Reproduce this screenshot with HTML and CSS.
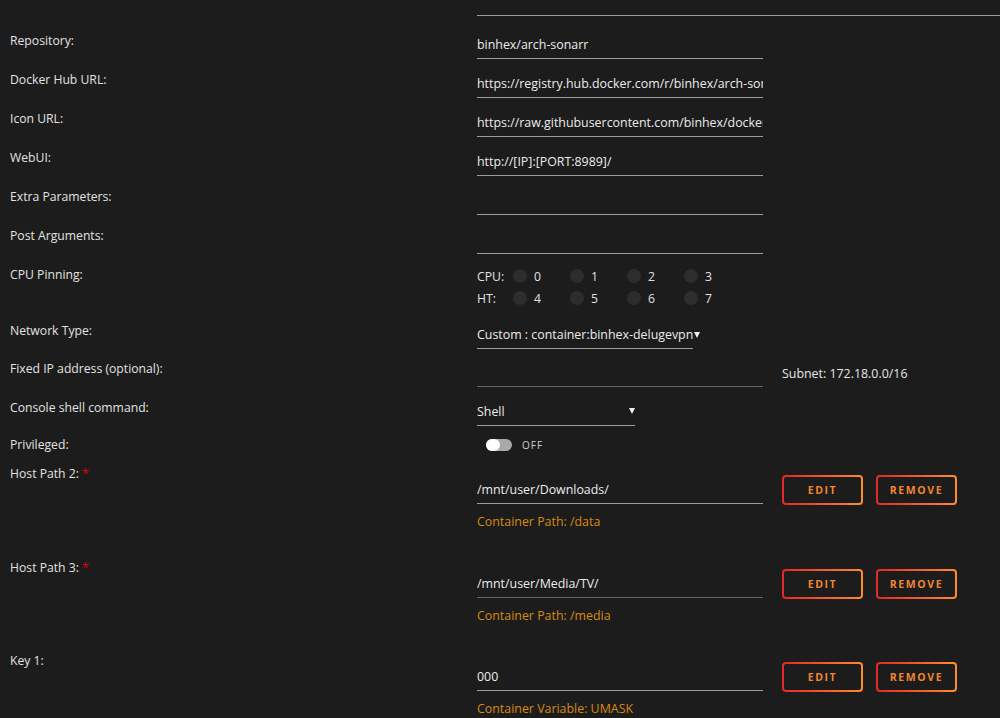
FILE: index.html
```html
<!DOCTYPE html>
<html lang="en">
<head>
	<meta charset="UTF-8">
	<title>Update Container</title>
	<link rel="stylesheet" href="styles.css">
</head>
<body>
	<div class="form">
		<div class="row first">
			<div class="label"></div>
			<div class="field"><input class="input wide" type="text" value=""></div>
		</div>
		<div class="row">
			<div class="label">Repository:</div>
			<div class="field"><input class="input" type="text" value="binhex/arch-sonarr"></div>
		</div>
		<div class="row">
			<div class="label">Docker Hub URL:</div>
			<div class="field"><input class="input" type="text" value="https://registry.hub.docker.com/r/binhex/arch-sonarr/"></div>
		</div>
		<div class="row">
			<div class="label">Icon URL:</div>
			<div class="field"><input class="input" type="text" value="https://raw.githubusercontent.com/binhex/docker-templates/master/binhex/images/sonarr-icon.png"></div>
		</div>
		<div class="row">
			<div class="label">WebUI:</div>
			<div class="field"><input class="input" type="text" value="http://[IP]:[PORT:8989]/"></div>
		</div>
		<div class="row">
			<div class="label">Extra Parameters:</div>
			<div class="field"><input class="input" type="text" value=""></div>
		</div>
		<div class="row">
			<div class="label">Post Arguments:</div>
			<div class="field"><input class="input" type="text" value=""></div>
		</div>
		<div class="row cpu-row">
			<div class="label">CPU Pinning:</div>
			<div class="field">
				<div class="cpu-line">
					<span class="cpu-name">CPU:</span>
					<span class="cpu"><i class="dot"></i>0</span>
					<span class="cpu"><i class="dot"></i>1</span>
					<span class="cpu"><i class="dot"></i>2</span>
					<span class="cpu"><i class="dot"></i>3</span>
				</div>
				<div class="cpu-line">
					<span class="cpu-name">HT:</span>
					<span class="cpu"><i class="dot"></i>4</span>
					<span class="cpu"><i class="dot"></i>5</span>
					<span class="cpu"><i class="dot"></i>6</span>
					<span class="cpu"><i class="dot"></i>7</span>
				</div>
			</div>
		</div>
		<div class="row tight">
			<div class="label">Network Type:</div>
			<div class="field">
				<div class="select network"><span>Custom : container:binhex-delugevpn</span><i class="caret"></i></div>
			</div>
		</div>
		<div class="row">
			<div class="label">Fixed IP address (optional):</div>
			<div class="field inline">
				<input class="input dim" type="text" value="">
				<span class="subnet">Subnet: 172.18.0.0/16</span>
			</div>
		</div>
		<div class="row tight">
			<div class="label">Console shell command:</div>
			<div class="field">
				<div class="select shell"><span>Shell</span><i class="caret"></i></div>
			</div>
		</div>
		<div class="row priv">
			<div class="label">Privileged:</div>
			<div class="field">
				<span class="switch"><i class="knob"></i></span><span class="switch-text">OFF</span>
			</div>
		</div>
		<div class="row config">
			<div class="label">Host Path 2: <span class="req">*</span></div>
			<div class="field">
				<div class="inline">
					<input class="input" type="text" value="/mnt/user/Downloads/">
					<button class="btn">Edit</button>
					<button class="btn">Remove</button>
				</div>
				<div class="desc">Container Path: /data</div>
			</div>
		</div>
		<div class="row config">
			<div class="label">Host Path 3: <span class="req">*</span></div>
			<div class="field">
				<div class="inline">
					<input class="input dim" type="text" value="/mnt/user/Media/TV/">
					<button class="btn">Edit</button>
					<button class="btn">Remove</button>
				</div>
				<div class="desc">Container Path: /media</div>
			</div>
		</div>
		<div class="row config last">
			<div class="label">Key 1:</div>
			<div class="field">
				<div class="inline">
					<input class="input" type="text" value="000">
					<button class="btn">Edit</button>
					<button class="btn">Remove</button>
				</div>
				<div class="desc">Container Variable: UMASK</div>
			</div>
		</div>
	</div>
</body>
</html>
```
FILE: styles.css
```css
* { margin:0; padding:0; box-sizing:border-box; }
html, body { height:100%; overflow:hidden; }
body { background:#1c1c1c; color:#e2e2e2; font:12.2px "Open Sans", "Noto Sans", sans-serif; }

.form { padding-left:10px; }
.row { display:grid; grid-template-columns:467px 1fr; margin-bottom:11px; }
.row.first { margin-bottom:15px; }
.row.tight { margin-bottom:10px; }
.label { line-height:20px; }
.req { color:#e80000; }

.input { display:block; width:286px; height:28px; background:transparent; border:0; border-bottom:1px solid #9c9c9c; color:#ececec; font:inherit; font-size:12.4px; outline:none; }
.input.wide { width:523px; height:16px; }
.input.dim { border-bottom-color:#626262; }

.field.inline, .inline { display:flex; align-items:center; }
.inline { height:28px; }
.subnet { margin-left:19px; color:#e6e6e6; font-size:12.4px; }

/* cpu pinning */
.cpu-row { margin-bottom:12px; }
.cpu-line { display:flex; align-items:center; height:22px; }
.cpu-name { width:36px; }
.cpu { display:flex; align-items:center; width:57px; }
.dot { width:14px; height:14px; border-radius:50%; background:#2d2d2d; margin-right:7px; }

/* selects */
.select { display:flex; align-items:center; justify-content:space-between; height:28px; border-bottom:1px solid #9c9c9c; color:#ececec; font-size:12.4px; white-space:nowrap; }
.select.network { width:216px; }
.select.shell { width:158px; padding-bottom:1px; }
.caret { width:0; height:0; border-left:3.5px solid transparent; border-right:3.5px solid transparent; border-top:6px solid #f0f0f0; margin-left:1px; }

/* switch */
.priv { margin-bottom:0; height:29px; }
.priv .label { line-height:18px; }
.priv .field { display:flex; align-items:center; height:18px; padding-left:9px; }
.switch { display:inline-block; position:relative; width:26px; height:12px; border-radius:6px; background:#a8a8a8; }
.knob { position:absolute; left:0; top:0; width:14px; height:12px; border-radius:6px; background:#fff; }
.switch-text { margin-left:10px; font-size:10px; letter-spacing:1px; color:#cfcfcf; }

/* host paths / variables */
.config { margin-bottom:27.5px; }
.config.last { margin-bottom:0; }
.config .label { line-height:18px; }
.config .field { padding-top:11px; }
.btn { flex:none; width:81px; height:30px; margin-left:13px; border:2px solid transparent; border-radius:4px; background:linear-gradient(#1c1c1c, #1c1c1c) padding-box, linear-gradient(90deg, #e22828, #ff8c2f) border-box; color:#f0862e; font:bold 10.5px "Open Sans", sans-serif; letter-spacing:1.6px; text-transform:uppercase; }
.inline .input + .btn { margin-left:19px; }
.desc { margin-top:9px; line-height:18px; color:#d88a10; font-size:12.4px; }
```
